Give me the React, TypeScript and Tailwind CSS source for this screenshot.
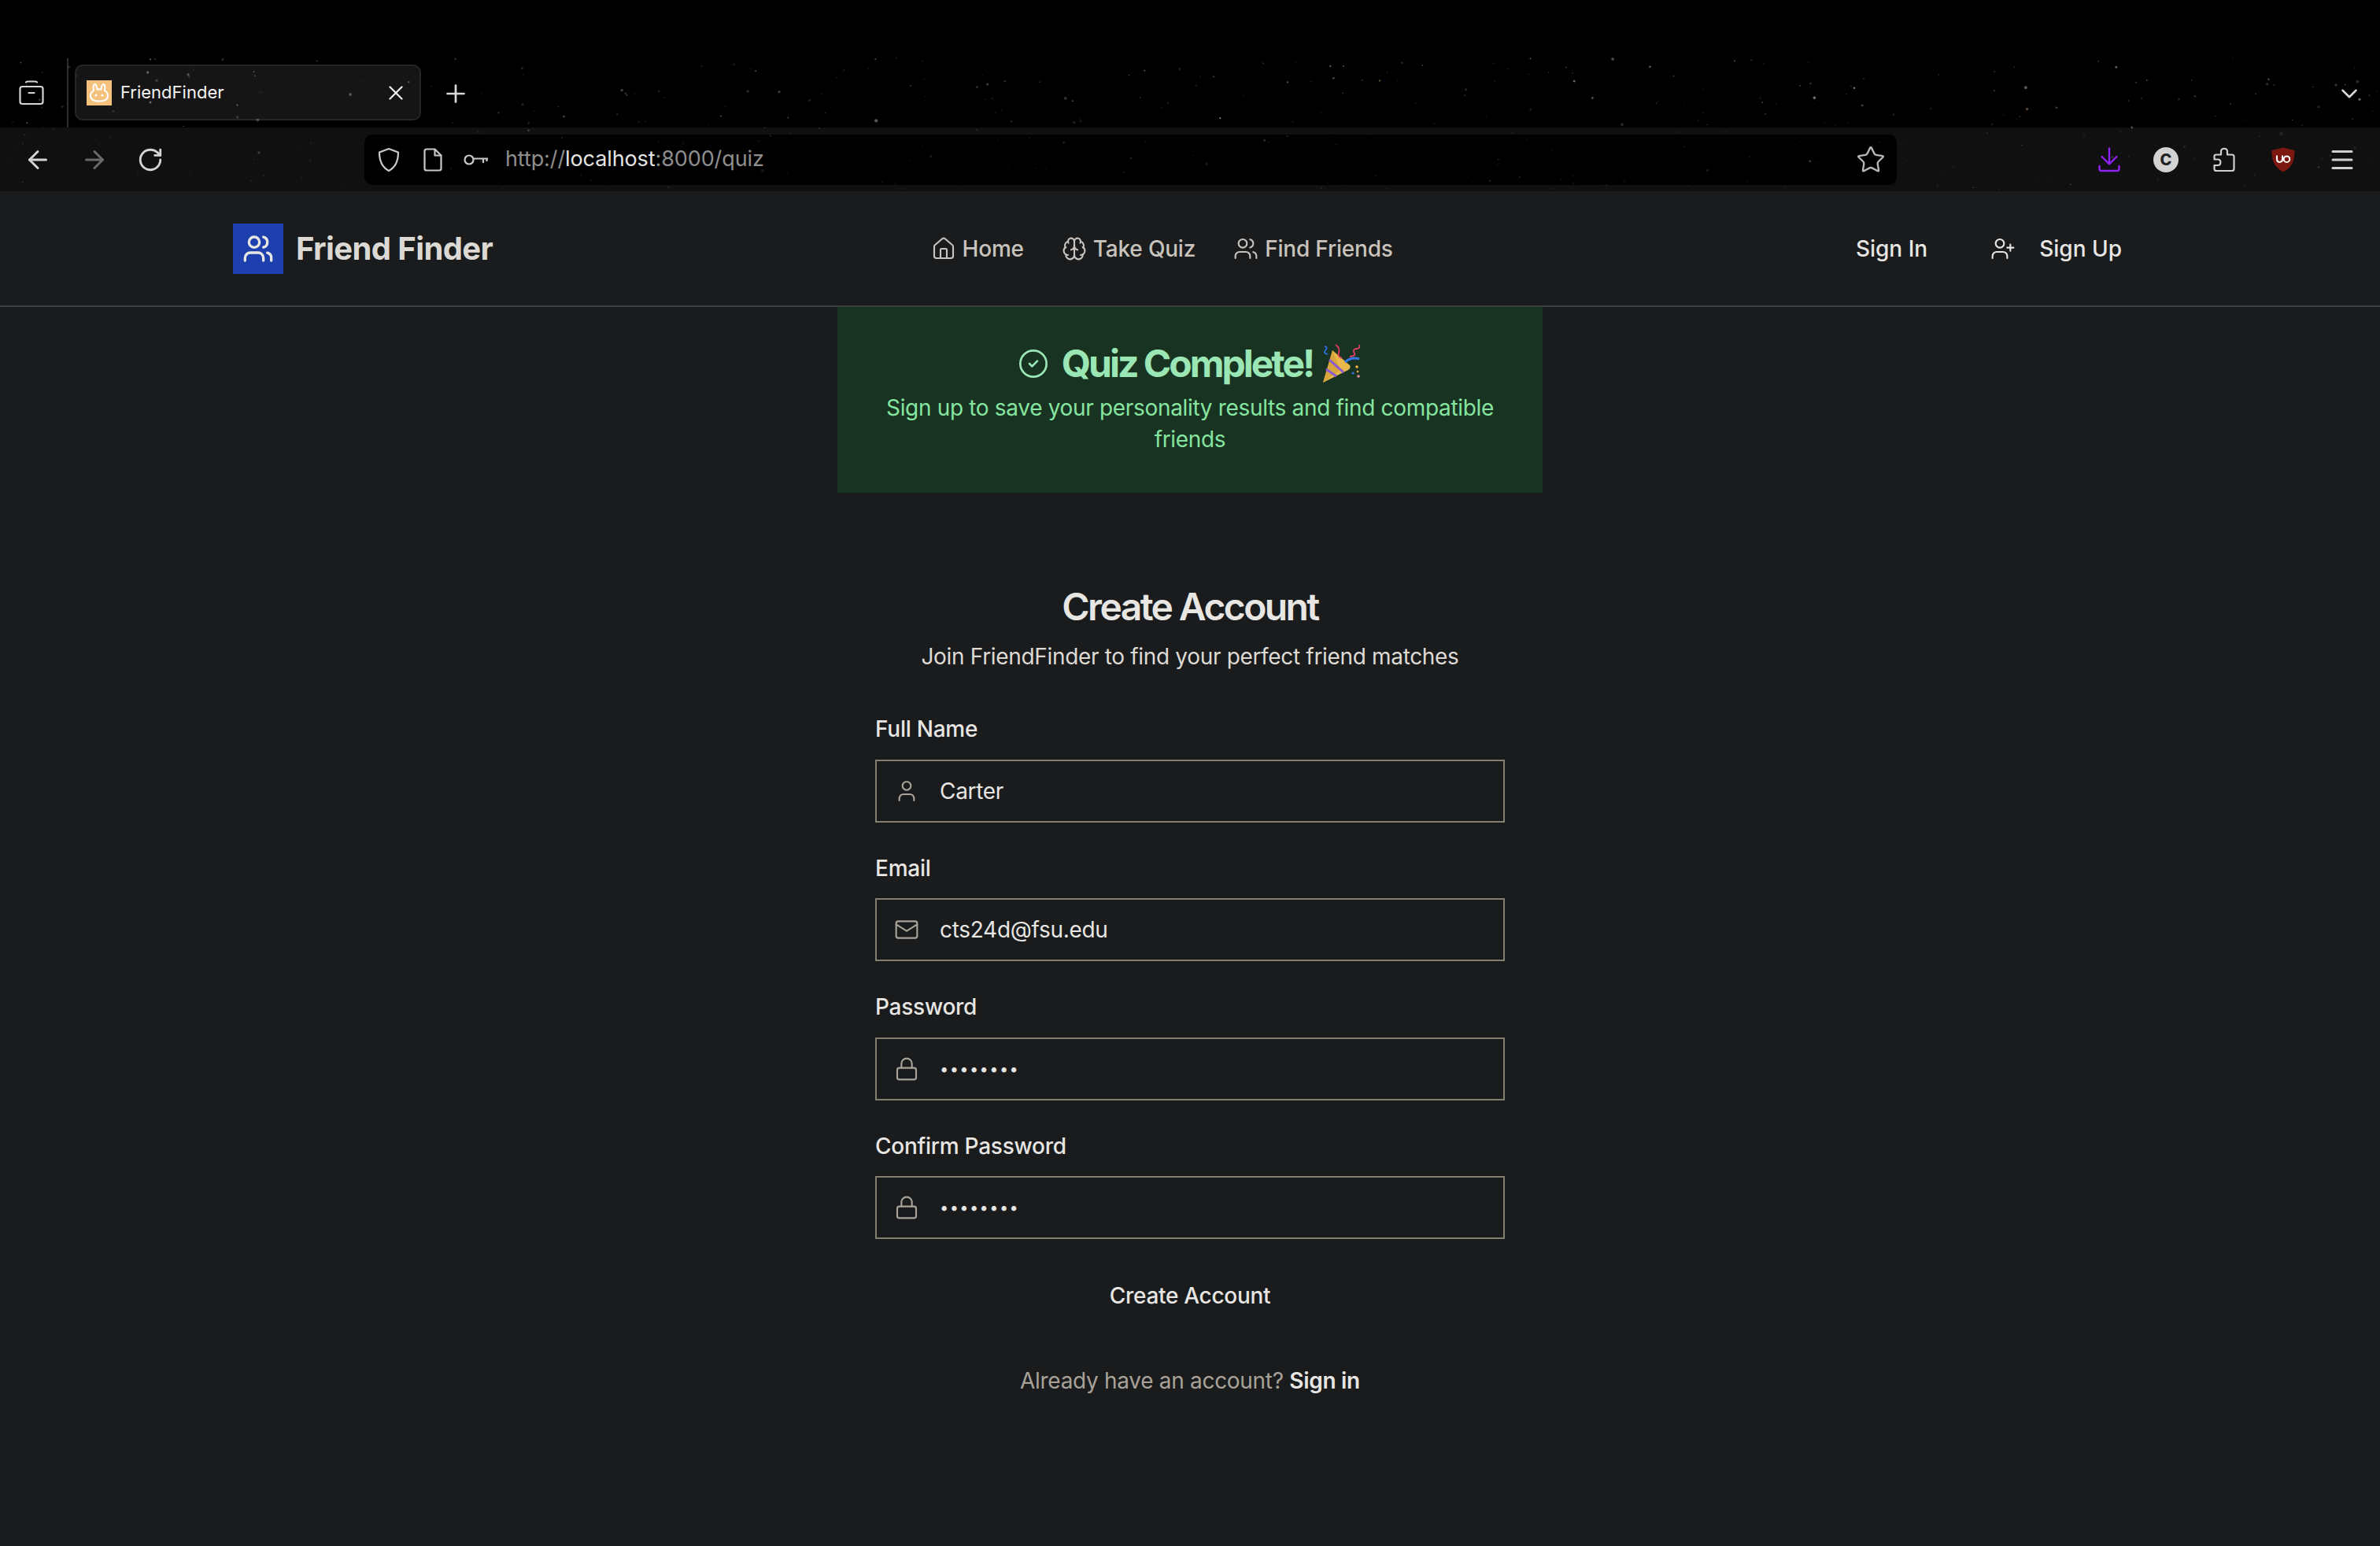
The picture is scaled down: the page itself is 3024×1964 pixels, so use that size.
import React from 'react';
import { Brain, CircleCheck, House, Lock, Mail, User, UserPlus, Users, X, Plus, ArrowLeft, ArrowRight, RotateCw, Menu, Star, ChevronDown } from 'lucide-react';

// tiny seeded generator so the star field stays the same on each render
const makeStars = (count: number) => {
  let seed = 4217;
  const next = () => {
    seed = (seed * 16807) % 2147483647;
    return seed / 2147483647;
  };
  return Array.from({ length: count }, () => {
    const y = 72 + next() * 170;
    const warm = next() > 0.9;
    return {
      x: next() * 3024,
      y,
      r: 0.6 + next() * next() * 1.6,
      o: (0.1 + next() * next() * 0.45) * (y > 162 ? 0.45 : 1),
      fill: warm ? '#e0b088' : '#ffffff',
    };
  });
};

const stars = makeStars(420);

const StarField = () => (
  <svg className="absolute left-0 top-0 pointer-events-none" width={3024} height={243}>
    {stars.map((s, i) => (
      <circle key={i} cx={s.x} cy={s.y} r={s.r} fill={s.fill} opacity={s.o} />
    ))}
  </svg>
);

const BunnyIcon = () => (
  <svg width="32" height="32" viewBox="0 0 32 32" className="shrink-0">
    <rect width="32" height="32" fill="#f5c27e" />
    <path
      d="M9 13 C8 8 9 5 10.5 5 C12.5 5 13 9 13.5 11.5 H18.5 C19 9 19.5 5 21.5 5 C23 5 24 8 23 13 C25.5 14.5 27 16.5 27 19.5 C27 24.5 22 26.5 16 26.5 C10 26.5 5 24.5 5 19.5 C5 16.5 6.5 14.5 9 13 Z"
      fill="none"
      stroke="#ffffff"
      strokeWidth="2"
    />
    <circle cx="12" cy="19" r="1.6" fill="#ffffff" />
    <circle cx="20" cy="19" r="1.6" fill="#ffffff" />
  </svg>
);

const TabsIcon = () => (
  <svg width="32" height="32" viewBox="0 0 32 32" fill="none" stroke="#d4d4d4" strokeWidth="2.2" strokeLinecap="round">
    <path d="M9 2.5 Q9.5 1.5 11 1.5 H21 Q22.5 1.5 23 2.5" />
    <rect x="1.5" y="8" width="29" height="22" rx="3" />
    <path d="M12.5 16 H19.5" />
  </svg>
);

const ShieldIcon = () => (
  <svg width="28" height="32" viewBox="0 0 28 32" fill="none" stroke="#c9c9c9" strokeWidth="2.2" strokeLinejoin="round">
    <path d="M14 2 L26 6.5 C26 17 23.5 25 14 30 C4.5 25 2 17 2 6.5 Z" />
  </svg>
);

const PageIcon = () => (
  <svg width="24" height="30" viewBox="0 0 24 30" fill="none" stroke="#c9c9c9" strokeWidth="2.2" strokeLinejoin="round">
    <path d="M4 1.5 H14.5 L22.5 9.5 V26 Q22.5 28.5 20 28.5 H4 Q1.5 28.5 1.5 26 V4 Q1.5 1.5 4 1.5 Z" />
    <path d="M14.5 1.5 V9.5 H22.5" />
  </svg>
);

const KeyIcon = () => (
  <svg width="32" height="18" viewBox="0 0 32 18" fill="none" stroke="#c9c9c9" strokeWidth="2.2">
    <circle cx="7" cy="9" r="5.5" />
    <path d="M12.5 7.5 H31 M25 7.5 V13 M29.5 7.5 V11" />
  </svg>
);

const DownloadIcon = () => (
  <svg width="28" height="32" viewBox="0 0 28 32" fill="none" stroke="#9022f5" strokeWidth="2.4" strokeLinecap="round" strokeLinejoin="round">
    <path d="M14 1.5 V21 M4.5 12 L14 21.5 L23.5 12" />
    <path d="M1.5 24 V27.5 Q1.5 30 4 30 H24 Q26.5 30 26.5 27.5 V24" />
  </svg>
);

const PuzzleIcon = () => (
  <svg width="28" height="32" viewBox="0 0 28 32" fill="none" stroke="#d0d0d0" strokeWidth="2.2" strokeLinejoin="round">
    <path d="M3.5 9.5 H10 V5.5 C10 0.5 18 0.5 18 5.5 V9.5 H24 Q26.5 9.5 26.5 12 V27.5 Q26.5 30 24 30 H4 Q1.5 30 1.5 27.5 V23 H6 C10.5 23 10.5 15.5 6 15.5 H1.5 V11.5 Q1.5 9.5 3.5 9.5 Z" />
  </svg>
);

const UBlockIcon = () => (
  <svg width="30" height="32" viewBox="0 0 30 32">
    <path d="M15 0.5 L29.5 4 C29.5 16 27 25.5 15 31.5 C3 25.5 0.5 16 0.5 4 Z" fill="#7c1810" />
    <path d="M7 10.5 V15.5 C7 20 14 20 14 15.5 V10.5" fill="none" stroke="#ffffff" strokeWidth="2" />
    <circle cx="19.5" cy="15.2" r="3.8" fill="none" stroke="#ffffff" strokeWidth="2" />
  </svg>
);

const PartyPopper = () => (
  <svg width="52" height="52" viewBox="0 0 52 52" className="shrink-0">
    <path d="M14 9 L36 28 Q38 31 34 34 L2 50 Z" fill="#e9b84a" />
    <path d="M14 9 L24 34 L2 50 Z" fill="#c9962f" opacity="0.55" />
    <path d="M10 21 L28 37 M6 33 L19 42" stroke="#8a5ad6" strokeWidth="3" fill="none" />
    <path d="M4 4 Q9 5 5 9 Q2 13 8 14" stroke="#2d6fdc" strokeWidth="1.8" fill="none" />
    <path d="M18 2 Q24 6 22 12 Q20 17 26 19" stroke="#de3f63" strokeWidth="1.8" fill="none" />
    <path d="M48 2 Q50 7 44 7 Q39 8 42 13 Q44 16 36 17" stroke="#de3f63" strokeWidth="1.8" fill="none" />
    <path d="M30 24 Q38 17 48 20" stroke="#3579e6" strokeWidth="3" fill="none" />
    <circle cx="45" cy="30" r="1.8" fill="#f2b33a" />
    <circle cx="40" cy="38" r="1.6" fill="#3579e6" />
    <circle cx="47" cy="42" r="1.8" fill="#e88aa5" />
    <circle cx="46" cy="36" r="1.3" fill="#f2b33a" />
  </svg>
);

const navLinks = [
  { label: 'Home', icon: House },
  { label: 'Take Quiz', icon: Brain },
  { label: 'Find Friends', icon: Users },
];

const fields = [
  { label: 'Full Name', value: 'Carter', icon: User },
  { label: 'Email', value: 'cts24d@fsu.edu', icon: Mail },
  { label: 'Password', value: '••••••••', icon: Lock, secret: true },
  { label: 'Confirm Password', value: '••••••••', icon: Lock, secret: true },
];

const BrowserChrome = () => (
  <div className="relative bg-black">
    <div className="h-[162px] flex items-end">
      <div className="w-[85px] h-[88px] pl-[24px] flex items-center">
        <TabsIcon />
      </div>
      <div className="w-[2px] h-[88px] bg-[#2e2e2e]" />
      <div className="ml-[8px] mb-[9px] w-[440px] h-[71px] rounded-[10px] border-2 border-[#262626] bg-[#151515] flex items-center pl-[13px] pr-[15px]">
        <BunnyIcon />
        <span className="ml-[11px] text-[22px] text-[#f4f4f4]">FriendFinder</span>
        <X className="ml-auto text-[#f0f0f0]" size={30} strokeWidth={1.8} />
      </div>
      <div className="ml-[26px] mb-[25px] text-[#d8d8d8]">
        <Plus size={36} strokeWidth={1.8} />
      </div>
      <div className="ml-auto mr-[22px] mb-[26px] text-[#d8d8d8]">
        <ChevronDown size={34} strokeWidth={1.8} />
      </div>
    </div>
    <div className="h-[81px] bg-[#101010] flex items-center">
      <div className="w-[463px] pl-[30px] flex items-center gap-[36px] text-[#d4d4d4]">
        <ArrowLeft size={36} strokeWidth={2} />
        <ArrowRight size={36} strokeWidth={2} className="text-[#6a6a6a]" />
        <RotateCw size={34} strokeWidth={2} />
      </div>
      <div className="w-[1947px] h-[64px] bg-black rounded-[10px] flex items-center pl-[17px] pr-[14px]">
        <ShieldIcon />
        <div className="ml-[30px]"><PageIcon /></div>
        <div className="ml-[27px]"><KeyIcon /></div>
        <span className="ml-[21px] text-[27px] tracking-[-0.1px] text-[#8e8e8e]">
          http://<span className="text-[#e4e4e4]">localhost</span>:8000/quiz
        </span>
        <Star size={38} strokeWidth={1.5} className="ml-auto text-[#b8b8b8]" />
      </div>
      <div className="flex-1 flex items-center pl-[256px]">
        <DownloadIcon />
        <div className="ml-[42px] w-[32px] h-[32px] rounded-full bg-[#d2d2d2] flex items-center justify-center text-[20px] font-extrabold text-[#222222]">
          C
        </div>
        <div className="ml-[44px]"><PuzzleIcon /></div>
        <div className="ml-[46px]"><UBlockIcon /></div>
        <Menu size={36} strokeWidth={2} className="ml-[42px] text-[#d0d0d0]" />
      </div>
    </div>
    <StarField />
  </div>
);

const Header = () => (
  <header className="h-[147px] border-b-2 border-[#3a3d40] bg-[#191b1d]">
    <div className="w-[2432px] h-full ml-[296px] flex items-center justify-between">
      <div className="flex items-center gap-[16px]">
        <div className="w-[64px] h-[64px] bg-[#1e40af] flex items-center justify-center text-[#e8e6e3]">
          <Users size={40} strokeWidth={2} />
        </div>
        <span className="text-[40px] font-bold tracking-[-0.6px] text-[#dcd9d4]">Friend Finder</span>
      </div>
      <nav className="flex items-center gap-[48px]">
        {navLinks.map(({ label, icon: Icon }) => (
          <a key={label} className="flex items-center gap-[8px] text-[28px] font-medium tracking-[-0.2px] text-[#c8c3bc]">
            <Icon size={32} strokeWidth={1.6} />
            {label}
          </a>
        ))}
      </nav>
      <div className="flex items-center gap-[16px] text-[28px] font-medium text-[#e8e6e3]">
        <button type="button" className="px-[32px]">Sign In</button>
        <button type="button" className="px-[32px] flex items-center gap-[30px]">
          <UserPlus size={32} strokeWidth={1.6} />
          Sign Up
        </button>
      </div>
    </div>
  </header>
);

const Banner = () => (
  <div className="w-[896px] mx-auto bg-[#193322] pt-[48px] pb-[48px] px-[48px] text-center">
    <div className="flex items-center justify-center gap-[16px] text-[#9ae6b4]">
      <CircleCheck size={40} strokeWidth={1.6} />
      <h2 className="text-[48px] leading-[48px] font-bold tracking-[-3px]">Quiz Complete!</h2>
      <div className="-ml-[5px] -my-[2px]"><PartyPopper /></div>
    </div>
    <p className="mt-[12px] text-[28px] leading-[40px] tracking-[-0.33px] text-[#86e5a0]">
      Sign up to save your personality results and find compatible friends
    </p>
  </div>
);

const SignupCard = () => (
  <div className="w-[896px] mx-auto mt-[65px] mb-[100px] p-[48px] bg-[#191b1d] shadow-[0_3px_10px_rgba(0,0,0,0.07)]">
    <h1 className="text-center text-[48px] leading-[64px] font-semibold tracking-[-2.6px] text-[#e8e6e3]">
      Create Account
    </h1>
    <p className="mt-[11px] text-center text-[28px] leading-[40px] tracking-[-0.33px] text-[#dedad4]">
      Join FriendFinder to find your perfect friend matches
    </p>
    <form className="mt-[54px] flex flex-col gap-[40px]">
      {fields.map(({ label, value, icon: Icon, secret }) => (
        <div key={label}>
          <label className="block text-[28px] leading-[36.5px] font-medium tracking-[-0.25px] text-[#e8e6e3]">{label}</label>
          <div className="mt-[20px] h-[80px] border-2 border-[#857f72] flex items-center pl-[22px] gap-[26px]">
            <Icon size={32} strokeWidth={1.6} className="text-[#a8a298] shrink-0" />
            {secret ? (
              <span className="text-[20px] tracking-[1.4px] text-[#e8e6e3]">{value}</span>
            ) : (
              <span className="text-[28px] tracking-[-0.3px] text-[#e8e6e3]">{value}</span>
            )}
          </div>
        </div>
      ))}
    </form>
    <button type="button" className="mt-[32px] w-full h-[80px] text-[28px] font-medium tracking-[-0.3px] text-[#e8e6e3]">
      Create Account
    </button>
    <p className="mt-[48px] text-center text-[28px] leading-[40px] tracking-[-0.3px] text-[#a8a298]">
      Already have an account? <a className="font-semibold text-[#e8e6e3]">Sign in</a>
    </p>
  </div>
);

export default function App() {
  return (
    <div className="min-h-[1964px] bg-[#191b1d] font-['Inter',sans-serif]">
      <BrowserChrome />
      <Header />
      <Banner />
      <SignupCard />
    </div>
  );
}
